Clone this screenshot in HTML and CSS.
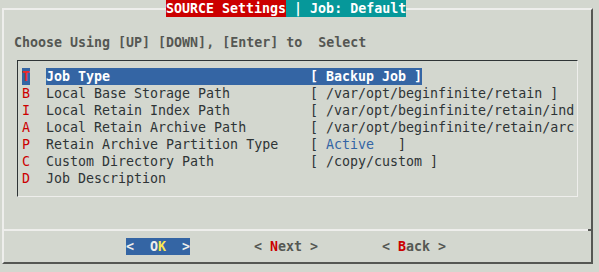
FILE: index.html
```html
<!DOCTYPE html>
<html lang="en">
<head>
<meta charset="utf-8">
<title>SOURCE Settings</title>
<link rel="stylesheet" href="styles.css">
</head>
<body>
<div class="dialog">
  <div class="title"><span class="title-main">SOURCE Settings</span><span class="title-sub"> | Job: Default</span></div>
  <div class="prompt">Choose Using [UP] [DOWN], [Enter] to  Select</div>
  <div class="menu">
    <div class="item selected"><span class="tag">T</span><span class="entry"><span class="label">Job Type</span><span class="value">[ Backup Job ]</span></span></div>
    <div class="item"><span class="tag">B</span><span class="entry"><span class="label">Local Base Storage Path</span><span class="value">[ /var/opt/beginfinite/retain ]</span></span></div>
    <div class="item"><span class="tag">I</span><span class="entry"><span class="label">Local Retain Index Path</span><span class="value">[ /var/opt/beginfinite/retain/ind</span></span></div>
    <div class="item"><span class="tag">A</span><span class="entry"><span class="label">Local Retain Archive Path</span><span class="value">[ /var/opt/beginfinite/retain/arc</span></span></div>
    <div class="item"><span class="tag">P</span><span class="entry"><span class="label">Retain Archive Partition Type</span><span class="value">[ <span class="accent">Active</span>   ]</span></span></div>
    <div class="item"><span class="tag">C</span><span class="entry"><span class="label">Custom Directory Path</span><span class="value">[ /copy/custom ]</span></span></div>
    <div class="item"><span class="tag">D</span><span class="entry"><span class="label">Job Description</span></span></div>
  </div>
  <div class="separator"><span class="sep-line"></span><span class="sep-tick"></span></div>
  <div class="buttons">
    <span class="btn active">&lt;  <span class="hot-o">O</span><span class="hot-k">K</span>  &gt;</span>
    <span class="btn">&lt; <span class="hot">N</span>ext &gt;</span>
    <span class="btn">&lt; <span class="hot">B</span>ack &gt;</span>
  </div>
</div>
</body>
</html>
```
FILE: styles.css
```css
* {
  box-sizing: border-box;
}

html,
body {
  margin: 0;
  padding: 0;
}

body {
  width: 599px;
  height: 272px;
  overflow: hidden;
  background: #d3d7cf;
  font-family: "DejaVu Sans Mono", "Liberation Mono", monospace;
  font-size: 13.3px;
  line-height: 17px;
  color: #2e3436;
}

.dialog {
  margin: 8px 0 0 2px;
  width: 591px;
  height: 256px;
  border-style: solid;
  border-width: 2px;
  border-color: #eeeeec #555753 #555753 #eeeeec;
  display: flex;
  flex-direction: column;
}

.title {
  display: flex;
  align-self: flex-start;
  margin: -10px 0 0 162px;
  height: 17px;
  white-space: pre;
  font-weight: bold;
  color: #ffffff;
}

.title-main {
  background: #cc0000;
}

.title-sub {
  background: #06989a;
}

.prompt {
  margin-top: 17px;
  padding-left: 10px;
  height: 17px;
  white-space: pre;
  font-weight: bold;
  color: #555753;
}

.menu {
  margin: 9px 0 0 13px;
  width: 561px;
  height: 137px;
  padding: 7px 0 0 4px;
  border-style: solid;
  border-width: 1px;
  border-color: #2e3436 #eeeeec #eeeeec #2e3436;
}

.item {
  display: flex;
  width: 552px;
  height: 17px;
  white-space: pre;
}

.tag {
  flex: none;
  width: 8px;
  color: #cc0000;
}

.entry {
  flex: none;
  display: flex;
  margin-left: 16px;
}

.label {
  flex: none;
  width: 264px;
}

.value {
  flex: none;
}

.accent {
  color: #3465a4;
}

.selected .tag {
  background: #3465a4;
  color: #ef2929;
  font-weight: bold;
}

.selected .entry {
  background: #3465a4;
  color: #ffffff;
  font-weight: bold;
}

.separator {
  display: flex;
  margin-top: 32px;
  height: 2px;
}

.sep-line {
  flex: 1;
  background: #eeeeec;
}

.sep-tick {
  flex: none;
  width: 3px;
  background: #555753;
}

.buttons {
  display: flex;
  gap: 64px;
  margin-top: 7px;
  padding-left: 122px;
  height: 17px;
}

.btn {
  flex: none;
  width: 64px;
  white-space: pre;
  font-weight: bold;
  color: #555753;
}

.btn.active {
  background: #3465a4;
  color: #eeeeec;
}

.hot-k {
  color: #fce94f;
}

.hot {
  color: #cc0000;
}
```
